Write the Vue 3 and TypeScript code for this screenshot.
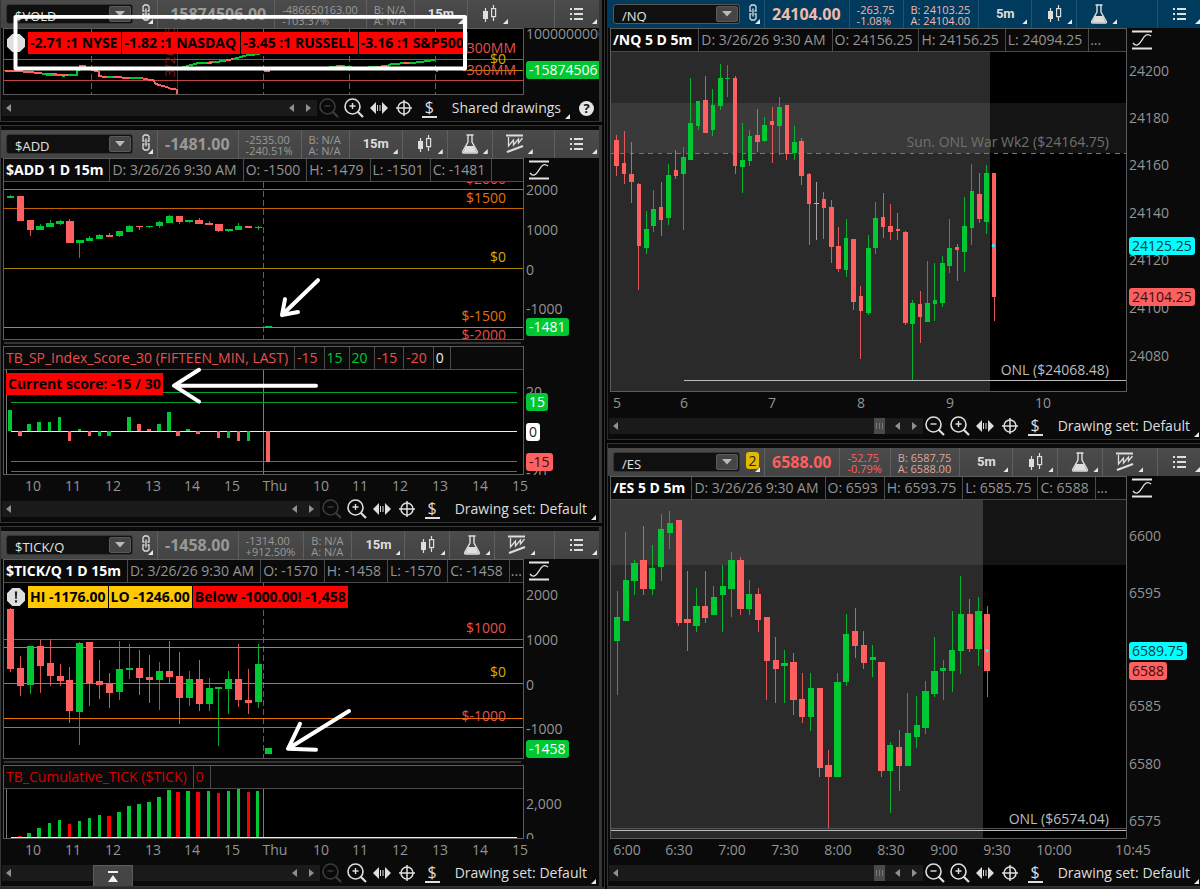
<script setup lang="ts">
type Tone = 'up' | 'down' | 'flat' | 'red' | 'orange' | 'amber' | 'gold' | 'white' | 'cyan' | 'grey' | 'rust' | 'dim' | 'pale' | 'bright'
type Candle = [number, number, number, number, 'u' | 'd' | 'f']
type Bar = [number, number, number, 'u' | 'd']

interface Level { y: number; tone: Tone; from?: number; to?: number; dash?: boolean }
interface Label { y: number; text: string; tone?: Tone }
interface Pane {
  cells: { text: string; tone?: Tone; title?: boolean }[]
  more?: boolean
  scaleIcon?: boolean
  height: number
  box: [number, number, number, number]
  areas?: { x: number; y: number; w: number; h: number; kind: string }[]
  levels: Level[]
  verticals?: { x: number; kind: string }[]
  candles?: { start: number; step: number; width: number; rows: Candle[] }
  bars?: { width: number; rows: Bar[]; tone?: string }
  strokes?: { points: string; tone: Tone }[]
  dot?: [number, number]
  notes: Label[]
  wideNotes?: Label[]
  ticks: Label[]
  tags: Label[]
  alert?: boolean
  chips?: { text: string; kind: string }[]
  dateMark?: string
}
interface Panel {
  id: string
  symbol: string
  link: 'chain' | 'badge'
  tone: string
  active?: boolean
  price: string
  change: [string, string]
  quote: [string, string]
  period: string
  tools: string[]
  panes: Pane[]
  times: [number, string][]
  timeBox: [number, number]
  thumb?: boolean
  canZoomOut?: boolean
  drawing: string
  help?: boolean
  drawer?: boolean
  marks?: { size: string; paths: string[] }
}

const sessionHours: [number, string][] = [
  [33, '10'], [73, '11'], [113, '12'], [153, '13'], [192, '14'], [232, '15'], [275, 'Thu'],
  [321, '10'], [360, '11'], [400, '12'], [440, '13'], [480, '14'], [520, '15'],
]

const left: Panel[] = [
  {
    id: 'vold', symbol: '$VOLD', link: 'chain', tone: 'muted', price: '-15874506.00',
    change: ['-486650163.00', '-103.37%'], quote: ['B: N/A', 'A: N/A'], period: '15m', tools: ['candles'],
    drawing: 'Shared drawings', help: true, times: [], timeBox: [3, 521],
    panes: [{
      cells: [], height: 65, box: [12, 87, 1557, 195],
      levels: [
        { y: 177, tone: 'rust' }, { y: 241, tone: 'rust' }, { y: 210, tone: 'gold', to: 40 }, { y: 210, tone: 'gold', from: 1400 },
      ],
      verticals: [{ x: 275, kind: 'dash' }, { x: 790, kind: 'dash' }, { x: 1048, kind: 'dash' }, { x: 1305, kind: 'dash' }, { x: 532, kind: 'ruby' }],
      strokes: [
        { tone: 'down', points: '14,213 60,214 90,216 120,220 160,223' },
        { tone: 'up', points: '124,220 140,224 175,225 190,227 210,225 232,225 232,210 238,210 238,200' },
        { tone: 'down', points: '160,223 205,225' },
        { tone: 'down', points: '238,198 254,198 254,206' },
        { tone: 'down', points: '276,208 285,213 298,215 298,228 308,230 350,231 380,234 420,233 440,238 460,241 468,252 480,256 500,261 512,266 524,266 530,270 530,282' },
        { tone: 'up', points: '320,232 340,231' },
        { tone: 'up', points: '390,233 425,234' },
        { tone: 'up', points: '545,203 570,196 595,189 640,187 670,183 700,177 740,166 780,162' },
        { tone: 'down', points: '620,189 640,187' },
        { tone: 'down', points: '675,182 700,177' },
        { tone: 'down', points: '792,213 810,213' },
        { tone: 'up', points: '862,204 890,204' },
        { tone: 'up', points: '985,203 1010,199 1030,199 1060,203 1100,203 1130,200 1160,199 1172,193 1215,189 1260,187 1275,184 1305,180' },
        { tone: 'down', points: '1010,200 1026,199' },
        { tone: 'down', points: '1140,201 1162,198' },
        { tone: 'down', points: '1212,189 1226,188' },
        { tone: 'up', points: '1307,213 1315,213' },
      ],
      notes: [{ y: 178, text: '$0', tone: 'gold' }],
      wideNotes: [{ y: 144, text: '300MM', tone: 'red' }, { y: 211, text: '-300MM', tone: 'red' }],
      ticks: [{ y: 105, text: '1000000000' }],
      tags: [{ y: 211, text: '-15874506', tone: 'up' }],
      alert: true,
      chips: [
        { text: '-2.71 :1 NYSE', kind: 'alarm roomy' }, { text: '-1.82 :1 NASDAQ', kind: 'alarm roomy' },
        { text: '-3.45 :1 RUSSELL', kind: 'alarm roomy' }, { text: '-3.16 :1 S&P500', kind: 'alarm roomy' },
      ],
      dateMark: '3/26/26',
    }],
    marks: { size: '0 0 602 122', paths: ['M15.5 17H465V69H15.5Z'] },
  },
  {
    id: 'add', symbol: '$ADD', link: 'chain', tone: 'muted', price: '-1481.00',
    change: ['-2535.00', '-240.51%'], quote: ['B: N/A', 'A: N/A'], period: '15m', tools: ['candles', 'flask', 'pattern'],
    drawing: 'Drawing set: Default', times: sessionHours, timeBox: [3, 521],
    panes: [
      {
        cells: [
          { text: '$ADD 1 D 15m', title: true }, { text: 'D: 3/26/26 9:30 AM' }, { text: 'O: -1500' },
          { text: 'H: -1479' }, { text: 'L: -1501' }, { text: 'C: -1481' },
        ],
        scaleIcon: true, height: 157, box: [12, 171, 1557, 471],
        levels: [{ y: 193, tone: 'red' }, { y: 251, tone: 'amber' }, { y: 430, tone: 'gold' }, { y: 607, tone: 'orange' }],
        verticals: [{ x: 791, kind: 'dash' }],
        candles: {
          start: 31, step: 29.8, width: 22, rows: [
            [209, 214, 218, 219, 'u'], [213, 213, 288, 288, 'd'], [286, 286, 315, 333, 'd'], [297, 303, 315, 315, 'u'],
            [286, 293, 305, 305, 'u'], [286, 289, 296, 301, 'u'], [283, 289, 353, 353, 'd'], [346, 346, 353, 398, 'u'],
            [333, 338, 348, 348, 'u'], [327, 330, 341, 341, 'u'], [324, 330, 335, 335, 'd'], [318, 318, 332, 337, 'u'],
            [300, 303, 320, 320, 'u'], [303, 303, 306, 314, 'd'], [303, 303, 307, 310, 'u'], [288, 291, 303, 308, 'u'],
            [269, 272, 294, 294, 'u'], [272, 272, 290, 296, 'd'], [286, 286, 291, 293, 'u'], [279, 286, 296, 296, 'd'],
            [288, 294, 299, 299, 'd'], [297, 297, 318, 321, 'd'], [312, 313, 318, 320, 'u'], [294, 303, 315, 315, 'u'],
            [303, 303, 310, 310, 'd'], [304, 306, 310, 315, 'u'], [603, 603, 607, 607, 'u'],
          ],
        },
        notes: [
          { y: 162, text: '$2000', tone: 'red' }, { y: 219, text: '$1500', tone: 'orange' }, { y: 398, text: '$0', tone: 'gold' },
          { y: 575, text: '$-1500', tone: 'orange' }, { y: 632, text: '$-2000', tone: 'red' },
        ],
        ticks: [{ y: 197, text: '2000' }, { y: 315, text: '1000' }, { y: 433, text: '0' }, { y: 551, text: '-1000' }],
        tags: [{ y: 604, text: '-1481', tone: 'up' }],
      },
      {
        cells: [
          { text: 'TB_SP_Index_Score_30 (FIFTEEN_MIN, LAST)', tone: 'red' }, { text: '-15', tone: 'red' }, { text: '15', tone: 'up' },
          { text: '20', tone: 'up' }, { text: '-15', tone: 'red' }, { text: '-20', tone: 'red' }, { text: '0', tone: 'white' },
        ],
        height: 104, box: [12, 90, 1557, 312],
        levels: [
          { y: 157, tone: 'up', from: 32, to: 1550 }, { y: 187, tone: 'up', from: 32, to: 1550 }, { y: 274, tone: 'white', from: 32, to: 1550 },
          { y: 365, tone: 'rust', from: 32, to: 1550 }, { y: 395, tone: 'rust', from: 32, to: 1550 },
        ],
        verticals: [{ x: 18, kind: 'solid' }, { x: 791, kind: 'solid' }],
        bars: {
          width: 11, rows: [
            [30, 210, 274, 'u'], [60, 274, 288, 'd'], [87, 252, 274, 'u'], [117, 246, 274, 'u'], [148, 246, 274, 'u'], [178, 232, 274, 'u'],
            [208, 274, 303, 'd'], [238, 267, 274, 'u'], [268, 274, 288, 'd'], [298, 274, 288, 'u'], [326, 274, 288, 'u'], [386, 232, 274, 'u'],
            [417, 252, 274, 'd'], [447, 267, 274, 'd'], [477, 252, 274, 'u'], [507, 216, 274, 'u'], [534, 274, 288, 'd'], [564, 267, 274, 'u'],
            [594, 274, 282, 'd'], [655, 274, 293, 'd'], [685, 274, 293, 'u'], [715, 274, 303, 'd'], [745, 274, 303, 'u'], [803, 274, 365, 'd'],
          ],
        },
        notes: [],
        ticks: [{ y: 157, text: '20' }, { y: 398, text: '-20' }],
        tags: [{ y: 186, text: '15', tone: 'up' }, { y: 274, text: '0', tone: 'white' }, { y: 365, text: '-15', tone: 'down' }],
        chips: [{ text: 'Current score: -15 / 30', kind: 'alarm' }],
      },
    ],
    marks: {
      size: '0 0 602 398',
      paths: ['M318 155L282 190M285 174L282 190L298 187', 'M316 261H174M199 245L174 261L199 277'],
    },
  },
  {
    id: 'tick', symbol: '$TICK/Q', link: 'chain', tone: 'muted', price: '-1458.00',
    change: ['-1314.00', '+912.50%'], quote: ['B: N/A', 'A: N/A'], period: '15m', tools: ['candles', 'flask', 'pattern'],
    drawing: 'Drawing set: Default', drawer: true, times: sessionHours, timeBox: [3, 521],
    panes: [
      {
        cells: [
          { text: '$TICK/Q 1 D 15m', title: true }, { text: 'D: 3/26/26 9:30 AM' }, { text: 'O: -1570' },
          { text: 'H: -1458' }, { text: 'L: -1570' }, { text: 'C: -1458' },
        ],
        more: true, scaleIcon: true, height: 175, box: [12, 174, 1557, 525],
        levels: [
          { y: 343, tone: 'rust' }, { y: 367, tone: 'orange' }, { y: 474, tone: 'gold' }, { y: 580, tone: 'orange' }, { y: 607, tone: 'red' },
        ],
        verticals: [{ x: 791, kind: 'dash' }],
        candles: {
          start: 31, step: 29.8, width: 21, rows: [
            [250, 253, 431, 440, 'd'], [393, 429, 483, 514, 'd'], [363, 363, 480, 508, 'u'], [346, 363, 423, 503, 'd'],
            [342, 415, 453, 483, 'd'], [417, 453, 468, 483, 'd'], [426, 465, 557, 593, 'd'], [350, 354, 560, 661, 'u'],
            [350, 352, 474, 544, 'd'], [404, 468, 479, 522, 'd'], [445, 474, 503, 549, 'd'], [347, 432, 501, 525, 'u'],
            [358, 429, 434, 462, 'u'], [375, 429, 459, 510, 'd'], [390, 456, 465, 534, 'd'], [411, 437, 465, 554, 'u'],
            [348, 437, 456, 478, 'd'], [381, 453, 519, 596, 'd'], [437, 462, 519, 542, 'u'], [406, 462, 538, 557, 'd'],
            [459, 489, 538, 557, 'u'], [486, 486, 492, 663, 'u'], [437, 462, 492, 566, 'u'], [358, 462, 525, 546, 'd'],
            [432, 525, 534, 568, 'd'], [358, 417, 530, 548, 'u'], [669, 669, 687, 687, 'u'],
          ],
        },
        notes: [{ y: 309, text: '$1000', tone: 'red' }, { y: 441, text: '$0', tone: 'gold' }, { y: 575, text: '$-1000', tone: 'red' }],
        ticks: [{ y: 211, text: '2000' }, { y: 345, text: '1000' }, { y: 478, text: '0' }, { y: 611, text: '-1000' }],
        tags: [{ y: 670, text: '-1458', tone: 'up' }],
        alert: true,
        chips: [
          { text: 'HI -1176.00', kind: 'caution' }, { text: 'LO -1246.00', kind: 'caution' }, { text: 'Below -1000.00! -1,458', kind: 'alarm' },
        ],
      },
      {
        cells: [{ text: 'TB_Cumulative_TICK ($TICK)', tone: 'bright' }, { text: '0', tone: 'bright' }],
        height: 49, box: [12, 793, 1557, 147],
        levels: [{ y: 938, tone: 'white', from: 32, to: 1550 }],
        verticals: [{ x: 18, kind: 'solid' }, { x: 791, kind: 'solid' }],
        bars: {
          width: 11, tone: 'pure', rows: [
            [60, 935, 938, 'd'], [87, 924, 936, 'u'], [117, 909, 936, 'u'], [148, 895, 936, 'u'], [178, 886, 936, 'u'], [208, 897, 936, 'd'],
            [238, 888, 936, 'u'], [268, 879, 936, 'u'], [298, 870, 936, 'u'], [326, 873, 936, 'd'], [357, 861, 936, 'u'], [386, 843, 936, 'u'],
            [417, 837, 936, 'u'], [447, 831, 936, 'u'], [477, 816, 936, 'u'], [507, 795, 936, 'u'], [534, 801, 936, 'd'], [564, 798, 936, 'u'],
            [594, 801, 936, 'd'], [625, 798, 936, 'u'], [655, 804, 936, 'd'], [685, 798, 936, 'u'], [715, 793, 936, 'u'], [745, 801, 936, 'd'],
            [772, 798, 936, 'u'],
          ],
        },
        notes: [],
        ticks: [{ y: 839, text: '2,000' }, { y: 938, text: '0' }],
        tags: [],
      },
    ],
    marks: { size: '0 0 602 361', paths: ['M349 185L288 223M300 198L288 223L316 224'] },
  },
]

const right: Panel[] = [
  {
    id: 'nq', symbol: '/NQ', link: 'chain', tone: 'soft', active: true, price: '24104.00',
    change: ['-263.75', '-1.08%'], quote: ['B: 24103.25', 'A: 24104.00'], period: '5m', tools: ['candles', 'flask'],
    drawing: 'Drawing set: Default', thumb: true, canZoomOut: true,
    times: [[617, '5'], [684, '6'], [772, '7'], [861, '8'], [950, '9'], [1043, '10']], timeBox: [610, 517],
    panes: [{
      cells: [
        { text: '/NQ 5 D 5m', title: true }, { text: 'D: 3/26/26 9:30 AM' }, { text: 'O: 24156.25' },
        { text: 'H: 24156.25' }, { text: 'L: 24094.25' },
      ],
      more: true, scaleIcon: true, height: 339, box: [33, 156, 1545, 1017],
      areas: [{ x: 33, y: 156, w: 1137, h: 1017, kind: 'session' }, { x: 33, y: 310, w: 1545, h: 148, kind: 'band' }],
      levels: [{ y: 459, tone: 'dim', dash: true }, { y: 1141, tone: 'pale', from: 253 }],
      candles: {
        start: 50, step: 22.2, width: 14, rows: [
          [405, 420, 498, 528, 'd'], [394, 489, 522, 552, 'd'], [425, 521, 545, 608, 'd'], [550, 552, 738, 871, 'd'],
          [633, 687, 743, 761, 'u'], [570, 628, 677, 696, 'u'], [546, 622, 660, 708, 'd'], [493, 526, 655, 674, 'u'],
          [450, 510, 528, 536, 'd'], [441, 471, 522, 690, 'u'], [235, 370, 480, 480, 'u'], [304, 304, 378, 391, 'u'],
          [228, 301, 398, 398, 'd'], [266, 316, 391, 408, 'u'], [192, 234, 317, 331, 'u'], [195, 234, 238, 291, 'u'],
          [228, 235, 498, 521, 'd'], [370, 480, 500, 580, 'u'], [390, 408, 482, 498, 'u'], [327, 405, 427, 456, 'd'],
          [350, 375, 423, 427, 'u'], [321, 362, 375, 488, 'd'], [291, 321, 378, 464, 'u'], [316, 316, 462, 480, 'd'],
          [378, 425, 458, 479, 'u'], [414, 423, 528, 555, 'd'], [520, 521, 611, 735, 'd'], [546, 608, 611, 720, 'f'],
          [576, 598, 624, 716, 'd'], [600, 622, 740, 789, 'd'], [680, 738, 806, 816, 'd'], [657, 713, 811, 830, 'u'],
          [717, 718, 906, 930, 'd'], [858, 888, 933, 1077, 'd'], [705, 743, 939, 944, 'u'], [606, 655, 744, 761, 'u'],
          [578, 652, 682, 713, 'd'], [611, 677, 696, 720, 'd'], [639, 687, 692, 720, 'd'], [693, 696, 969, 974, 'd'],
          [899, 909, 971, 1140, 'u'], [872, 912, 951, 1028, 'd'], [783, 909, 965, 965, 'u'], [789, 900, 912, 963, 'u'],
          [768, 789, 909, 920, 'u'], [657, 743, 797, 820, 'u'], [732, 741, 750, 844, 'd'], [591, 677, 756, 816, 'u'],
          [493, 573, 684, 735, 'u'], [520, 582, 657, 668, 'd'], [495, 518, 665, 701, 'u'], [518, 518, 891, 963, 'd'],
        ],
      },
      dot: [1180, 737],
      notes: [{ y: 427, text: 'Sun. ONL War Wk2 ($24164.75)', tone: 'dim' }, { y: 1110, text: 'ONL ($24068.48)', tone: 'pale' }],
      ticks: [
        { y: 213, text: '24200' }, { y: 355, text: '24180' }, { y: 495, text: '24160' }, { y: 638, text: '24140' },
        { y: 780, text: '24120' }, { y: 924, text: '24100' }, { y: 1065, text: '24080' },
      ],
      tags: [{ y: 738, text: '24125.25', tone: 'cyan' }, { y: 889, text: '24104.25', tone: 'down' }],
    }],
  },
  {
    id: 'es', symbol: '/ES', link: 'badge', tone: 'loss', price: '6588.00',
    change: ['-52.75', '-0.79%'], quote: ['B: 6587.75', 'A: 6588.00'], period: '5m', tools: ['candles', 'flask', 'pattern'],
    drawing: 'Drawing set: Default', thumb: true, canZoomOut: true,
    times: [
      [627, '6:00'], [679, '6:30'], [732, '7:00'], [785, '7:30'], [838, '8:00'], [891, '8:30'],
      [944, '9:00'], [997, '9:30'], [1054, '10:00'], [1133, '10:45'],
    ],
    timeBox: [610, 517],
    panes: [{
      cells: [
        { text: '/ES 5 D 5m', title: true }, { text: 'D: 3/26/26 9:30 AM' }, { text: 'O: 6593' },
        { text: 'H: 6593.75' }, { text: 'L: 6585.75' }, { text: 'C: 6588' },
      ],
      more: true, scaleIcon: true, height: 338, box: [33, 180, 1545, 1014],
      areas: [{ x: 33, y: 180, w: 1115, h: 1014, kind: 'session' }, { x: 33, y: 180, w: 1545, h: 196, kind: 'band' }],
      levels: [{ y: 1166, tone: 'grey' }, { y: 1170, tone: 'pale' }],
      candles: {
        start: 51, step: 26.45, width: 19, rows: [
          [453, 531, 602, 764, 'u'], [275, 420, 542, 542, 'u'], [361, 369, 423, 465, 'u'], [258, 360, 447, 465, 'd'],
          [316, 385, 447, 465, 'u'], [222, 267, 380, 423, 'u'], [214, 248, 278, 327, 'u'], [240, 240, 549, 557, 'd'],
          [393, 537, 549, 634, 'd'], [445, 498, 557, 576, 'u'], [393, 498, 533, 549, 'd'], [437, 471, 525, 525, 'u'],
          [376, 437, 465, 576, 'u'], [336, 360, 447, 532, 'u'], [352, 360, 507, 525, 'd'], [420, 462, 507, 525, 'u'],
          [445, 462, 541, 576, 'd'], [531, 531, 662, 780, 'd'], [591, 660, 687, 788, 'd'], [631, 668, 678, 788, 'u'],
          [640, 667, 780, 825, 'd'], [700, 777, 831, 849, 'd'], [700, 744, 831, 873, 'u'], [744, 744, 985, 1010, 'd'],
          [931, 975, 1010, 1163, 'd'], [700, 725, 1010, 1010, 'u'], [522, 582, 727, 738, 'u'], [505, 573, 618, 654, 'd'],
          [573, 615, 669, 686, 'd'], [615, 651, 661, 711, 'u'], [666, 667, 993, 1010, 'd'], [906, 914, 993, 1119, 'u'],
          [870, 922, 977, 1053, 'd'], [760, 879, 977, 977, 'u'], [768, 854, 891, 924, 'u'], [724, 753, 864, 881, 'u'],
          [591, 692, 762, 770, 'u'], [659, 684, 693, 780, 'u'], [514, 631, 694, 755, 'u'], [409, 522, 633, 702, 'u'],
          [478, 522, 627, 635, 'd'], [470, 514, 627, 678, 'u'], [498, 522, 694, 770, 'd'],
        ],
      },
      dot: [1161, 632],
      notes: [{ y: 1138, text: 'ONL ($6574.04)', tone: 'pale' }],
      ticks: [
        { y: 288, text: '6600' }, { y: 458, text: '6595' }, { y: 798, text: '6585' }, { y: 971, text: '6580' }, { y: 1141, text: '6575' },
      ],
      tags: [{ y: 632, text: '6589.75', tone: 'cyan' }, { y: 692, text: '6588', tone: 'down' }],
    }],
  },
]

const columns = [{ side: 'left', panels: left }, { side: 'right', panels: right }]

const topOf = (pane: Pane, y: number) => ({ top: `${((y - 1 - pane.box[1]) / pane.box[3]) * 100}%` })
const leftOf = (panel: Panel, x: number) => ({ left: `${((x - panel.timeBox[0]) / panel.timeBox[1]) * 100}%` })
const candleX = (pane: Pane, i: number) => {
  const set = pane.candles!
  return set.start + set.step * i
}
const candleColor = (kind: string) => (kind === 'u' ? 'up' : kind === 'd' ? 'down' : 'flat')
</script>

<template>
  <main class="desk">
    <div v-for="col in columns" :key="col.side" class="column" :class="col.side">
      <section v-for="p in col.panels" :key="p.id" class="panel" :class="{ active: p.active }" :aria-label="p.symbol">
        <header class="toolbar" :class="p.tone">
          <div class="combo">
            <input :id="`symbol-${p.id}`" type="text" :value="p.symbol" aria-label="Symbol" />
            <button type="button" aria-label="Choose symbol"><svg width="10" height="6" viewBox="0 0 10 6"><path d="M0 0h10L5 5.500z" fill="#b9b9b9" /></svg></button>
          </div>
          <button type="button" class="linker corner" aria-label="Link">
            <svg v-if="p.link === 'chain'" width="8" height="17" viewBox="0 0 8 17" fill="none" stroke="#dedede" stroke-width="1.300">
              <path d="M2.500 7H1V2.500L2.500 1h3L7 2.500V7H5.500M2.500 10H1v4.500L2.500 16h3L7 14.500V10H5.500M4 4.500v8" />
            </svg>
            <span v-else class="linkno">2</span>
          </button>
          <strong class="price">{{ p.price }}</strong>
          <span class="pair change"><span>{{ p.change[0] }}</span><span>{{ p.change[1] }}</span></span>
          <span class="pair quote"><span>{{ p.quote[0] }}</span><span>{{ p.quote[1] }}</span></span>
          <button type="button" class="period corner">{{ p.period }}</button>
          <button v-for="t in p.tools" :key="t" type="button" class="tool corner" :aria-label="t">
            <svg v-if="t === 'candles'" width="15" height="18" viewBox="0 0 15 18">
              <path d="M3.500 3v14M11.500 0v16" stroke="#dedede" stroke-width="1.200" />
              <rect x="1" y="6" width="5" height="8" fill="#dedede" />
              <rect class="hollow" x="9.600" y="3.600" width="4" height="8" stroke="#dedede" stroke-width="1.200" />
            </svg>
            <svg v-else-if="t === 'flask'" width="18" height="20" viewBox="0 0 18 20" fill="none" stroke="#dedede" stroke-width="1.400">
              <path d="M5.500 1h7M7 1v7L1.800 17.200Q1 19 2.600 19h12.800Q17 19 16.200 17.200L11 8V1" />
              <path d="M5.200 12h7.600l3 6.500H2z" fill="#dedede" stroke="none" />
            </svg>
            <svg v-else width="18" height="20" viewBox="0 0 18 20" fill="none" stroke="#dedede">
              <path d="M0 1.500h17" stroke-width="2" />
              <path d="M2.500 3v9l5-6v5l5-6v4l4-5" stroke-width="1.300" />
              <path d="M1 18l16-6" stroke-width="2.200" />
            </svg>
          </button>
          <button type="button" class="menu corner" aria-label="Menu">
            <svg width="14" height="13" viewBox="0 0 14 13" fill="#dedede">
              <path d="M0 0h2v2H0zM4 0h9v2H4zM0 5h2v2H0zM4 5h9v2H4zM0 10h2v2H0zM4 10h9v2H4z" />
            </svg>
          </button>
        </header>

        <div v-for="(pane, n) in p.panes" :key="n" class="pane">
          <div class="frame">
            <div v-if="pane.cells.length" class="status">
              <span v-for="(c, i) in pane.cells" :key="i" :class="[c.tone, { title: c.title }]">{{ c.text }}</span>
              <span v-if="pane.more" class="more">...</span>
            </div>
            <div class="plot" :style="{ height: pane.height + 'px' }">
              <svg class="chart" :viewBox="pane.box.join(' ')" preserveAspectRatio="none" shape-rendering="crispEdges">
                <rect v-for="a in pane.areas" :key="a.kind" :x="a.x" :y="a.y" :width="a.w" :height="a.h" :class="a.kind" />
                <line v-for="(v, i) in pane.verticals" :key="'v' + i" :x1="v.x" :x2="v.x" :y1="pane.box[1]" :y2="pane.box[1] + pane.box[3]" class="rule" :class="v.kind" />
                <line v-for="(l, i) in pane.levels" :key="'l' + i" :x1="l.from ?? pane.box[0]" :x2="l.to ?? pane.box[0] + pane.box[2]" :y1="l.y" :y2="l.y" class="level" :class="[l.tone, { dotted: l.dash }]" />
                <template v-if="pane.candles">
                  <g v-for="(c, i) in pane.candles.rows" :key="'c' + i" :class="candleColor(c[4])">
                    <rect class="wick" :x="candleX(pane, i) - 1.5" :y="c[0]" width="3" :height="c[3] - c[0]" />
                    <rect class="body" :x="candleX(pane, i) - pane.candles.width / 2" :y="c[1]" :width="pane.candles.width" :height="c[2] - c[1]" />
                  </g>
                </template>
                <template v-if="pane.bars">
                  <g v-for="(b, i) in pane.bars.rows" :key="'b' + i" :class="[candleColor(b[3]), pane.bars.tone]">
                    <rect class="body" :x="b[0] - pane.bars.width / 2" :y="b[1]" :width="pane.bars.width" :height="b[2] - b[1]" />
                  </g>
                </template>
                <polyline v-for="(s, i) in pane.strokes" :key="'s' + i" :points="s.points" class="trace" :class="s.tone" />
                <circle v-if="pane.dot" :cx="pane.dot[0]" :cy="pane.dot[1]" r="5" fill="#00ffff" shape-rendering="auto" />
              </svg>
              <span v-if="pane.dateMark" class="datemark">{{ pane.dateMark }}</span>
              <span v-for="(t, i) in pane.notes" :key="'n' + i" class="note" :class="t.tone" :style="topOf(pane, t.y)">{{ t.text }}</span>
              <span v-for="(t, i) in pane.wideNotes" :key="'w' + i" class="note wide" :class="t.tone" :style="topOf(pane, t.y)">{{ t.text }}</span>
              <div v-if="pane.chips" class="chips">
                <svg v-if="pane.alert" width="18" height="18" viewBox="0 0 18 18">
                  <path d="M5.300 0h7.400L18 5.300v7.400L12.700 18H5.300L0 12.700V5.300z" fill="#dedede" />
                  <path d="M7.800 3.500h2.400L9.700 11H8.300zM7.900 12.300h2.200v2.200H7.900z" fill="#222" />
                </svg>
                <b v-for="c in pane.chips" :key="c.text" :class="c.kind">{{ c.text }}</b>
              </div>
            </div>
          </div>
          <div class="scale">
            <div v-if="pane.cells.length" class="scalehead">
              <svg v-if="pane.scaleIcon" width="20" height="20" viewBox="0 0 20 20" fill="none" stroke="#e6e6e6">
                <path d="M0 1.500h20M0 18.500h20" stroke-width="2.200" />
                <path d="M1 13C4 17 7 15 10 10S15 3 19 6" stroke-width="1.400" />
              </svg>
            </div>
            <div class="ticks">
              <span v-for="t in pane.ticks" :key="t.text" class="tick" :style="topOf(pane, t.y)">{{ t.text }}</span>
              <span v-for="t in pane.tags" :key="t.text" class="tag" :class="t.tone" :style="topOf(pane, t.y)">{{ t.text }}</span>
            </div>
          </div>
        </div>

        <div v-if="p.times.length" class="times">
          <div class="timescale">
            <span v-for="(t, i) in p.times" :key="i" :style="leftOf(p, t[0])">{{ t[1] }}</span>
          </div>
        </div>
        <div v-else class="spacer"></div>

        <footer class="foot">
          <div class="track">
            <button type="button" aria-label="Scroll to start"><svg width="5" height="8" viewBox="0 0 5 8"><path d="M5 0v8L0 4z" /></svg></button>
            <span class="fill"></span>
            <span v-if="p.thumb" class="thumb"></span>
            <button type="button" class="step" aria-label="Scroll left"><svg width="5" height="8" viewBox="0 0 5 8"><path d="M5 0v8L0 4z" /></svg></button>
            <button type="button" class="step" aria-label="Scroll right"><svg width="5" height="8" viewBox="0 0 5 8"><path d="M0 0v8l5-4z" /></svg></button>
          </div>
          <div class="actions">
            <button type="button" aria-label="Zoom out" :disabled="!p.canZoomOut">
              <svg width="20" height="20" viewBox="0 0 20 20" fill="none" stroke="currentColor"><circle cx="8.500" cy="8.500" r="7.500" stroke-width="1.600" /><path d="M5.500 8h6" stroke-width="1.400" /><path d="M13.500 13.500l5.500 5.500" stroke-width="2.200" /></svg>
            </button>
            <button type="button" aria-label="Zoom in">
              <svg width="20" height="20" viewBox="0 0 20 20" fill="none" stroke="currentColor"><circle cx="8.500" cy="8.500" r="7.500" stroke-width="1.600" /><path d="M5.500 8h6M8.500 5v6" stroke-width="1.400" /><path d="M13.500 13.500l5.500 5.500" stroke-width="2.200" /></svg>
            </button>
            <button type="button" aria-label="Pan">
              <svg width="18" height="12" viewBox="0 0 18 12" fill="currentColor"><path d="M6 0v12L0 6zM12 0v12l6-6zM7 3h1v6H7zM9.500 3h1v6h-1z" /></svg>
            </button>
            <button type="button" aria-label="Crosshair">
              <svg width="16" height="16" viewBox="0 0 16 16" fill="none" stroke="currentColor" stroke-width="1.500"><circle cx="8" cy="8" r="6" /><path d="M8 0v16M0 8h16" /></svg>
            </button>
            <button type="button" class="dollar" aria-label="Price line"><span>$</span></button>
          </div>
          <button type="button" class="drawing corner">{{ p.drawing }}</button>
          <button v-if="p.help" type="button" class="help" aria-label="Help">?</button>
        </footer>
        <button v-if="p.drawer" type="button" class="drawer" aria-label="Expand">
          <svg width="12" height="11" viewBox="0 0 12 11" fill="#f0f0f0"><path d="M1 0h10v2H1zM6 4l5 7H1z" /></svg>
        </button>
        <svg v-if="p.marks" class="marks" :viewBox="p.marks.size" preserveAspectRatio="none">
          <path v-for="d in p.marks.paths" :key="d" :d="d" />
        </svg>
      </section>
    </div>
  </main>
</template>

<style>
body { margin: 0; background: #000; }
</style>

<style scoped>
.desk {
  display: grid;
  grid-template-columns: 605fr 593fr;
  column-gap: 2px;
  overflow: hidden;
  background: #050505;
  font: 14px/20px "Open Sans", "Noto Sans", sans-serif;
  color: #949494;
}
.desk * { box-sizing: border-box; }
button, input { font: inherit; color: inherit; border: 0; padding: 0; margin: 0; background: none; min-width: 0; }
svg { display: block; }

.column { display: flex; flex-direction: column; gap: 3px; min-width: 0; border-bottom: 2px solid #2c2c2c; }
.column.left { padding-right: 2px; border-right: 1px solid #303030; }
.column.right { margin-right: -2px; }
.panel {
  position: relative;
  min-width: 0;
  background: #0a0a0a;
  border: solid #353535;
  border-width: 1px 3px 1px 1px;
  padding-top: 4px;
  padding-bottom: 5px;
}
.column.right .panel { border-right-width: 0; }
.panel:first-child { border-top: 0; padding-top: 0; }
.panel.active { border-color: #003a5c; }

.toolbar {
  display: flex;
  align-items: stretch;
  height: 28px;
  padding-left: 5px;
  background: linear-gradient(#4b4b4b, #434343);
  color: #999;
}
.active .toolbar { background: #003a5c; }
.toolbar > * + * { flex: none; }
.combo {
  display: flex;
  flex: none;
  width: 127px;
  height: 20px;
  margin: 4px 0;
  padding: 1px;
  border: 1px solid #343434;
  border-radius: 3px;
  background: #101010;
}
.combo input { flex: 1; padding: 4px 0 0 7px; color: #e4e4e4; font-size: 13px; line-height: 16px; outline: 0; }
.combo button { width: 22px; display: grid; place-items: center; background: #454545; border: 1px solid #5a5a5a; border-radius: 2px; }
.corner { position: relative; }
.corner::after {
  content: "";
  position: absolute;
  right: 4px;
  bottom: 4px;
  width: 5px;
  height: 5px;
  background: #e8e8e8;
  clip-path: polygon(100% 0, 100% 100%, 0 100%);
}
.linker { width: 24px; padding: 0 6px 3px 9px; display: flex; align-items: center; }
.linkno { width: 13px; margin-left: -3px; border-radius: 3px; background: #e3b800; color: #222; font-size: 14px; line-height: 17px; flex: none; }
.toolbar > .price, .pair, .period, .tool, .menu { border-left: 1px solid #5f5f5f; }
.active .toolbar > * { border-left-color: #215272; }
.active .toolbar > .combo { border-color: #5d5650; }
.hollow { fill: #484848; }
.active .hollow { fill: #003a5c; }
.price { padding: 0 8px 0 7px; font-size: 16px; line-height: 28px; }
.pair { display: flex; flex-direction: column; padding: 4px 8px 0 7px; font-size: 11px; line-height: 11px; }
.period { width: 53px; color: #dedede; font-family: Roboto, "Noto Sans", sans-serif; font-size: 13px; font-weight: 700; }
.tool { width: 45px; display: grid; place-items: center; }
.menu { width: 45px; margin-left: auto; display: grid; place-items: center; }
.period::after, .tool::after { right: 4px; }
.menu::after { right: 2px; }
.soft { color: #f2b9ad; }
.loss .price, .loss .change { color: #ff5f5f; }
.loss .quote { color: #dda59d; }

.pane { display: flex; padding-left: 2px; }
.pane + .pane { margin-top: 6px; }
.pane + .pane::before {
  content: "";
  position: absolute;
  left: 3px;
  right: 78px;
  height: 2px;
  margin-top: -4px;
  background: #333;
}
.frame { flex: 1; min-width: 0; border: 1px solid #5c5c5c; background: #000; }
.status { display: flex; height: 23px; border-bottom: 1px solid #4b4b4b; overflow: hidden; white-space: nowrap; line-height: 22px; background: #0a0a0a; }
.status span { padding: 0 6px 0 2px; border-right: 1px solid #4b4b4b; }
.status .title { color: #fff; font-weight: 700; }
.status .more { border: 0; padding: 0 0 0 1px; }
.plot { position: relative; overflow: hidden; }
.chart { width: 100%; height: 100%; }
.session { fill: #2a2a2a; }
.band { fill: #fff; fill-opacity: 0.08; }
.rule { stroke-width: 3; stroke: #7a7a7a; }
.rule.dash { stroke: #606060; stroke-dasharray: 18 9; }
.rule.ruby { stroke: #7a1c1c; }
.level { stroke-width: 3; stroke: currentColor; }
.level.gold { color: #a88600; }
.level.up { color: #00a32c; }
.level.dim { color: #777; }
.level.dotted { stroke-dasharray: 14 14; }
.trace { fill: none; stroke: currentColor; stroke-width: 6; }
.wick { fill: currentColor; opacity: 0.85; }
.body { fill: currentColor; }
.pure.down { color: #f00; }

.up { color: #00c832; }
.down { color: #ff5f5f; }
.flat { color: #b5b5b5; }
.red { color: #e65050; }
.bright { color: #d60000; }
.rust { color: #bd4444; }
.orange { color: #e67300; }
.amber { color: #c06000; }
.gold { color: #d2b000; }
.white { color: #eee; }
.dim { color: #707070; }
.pale { color: #bcbcbc; }
.grey { color: #555; }

.note { position: absolute; right: 17px; transform: translateY(-50%); white-space: nowrap; }
.note.wide { right: 7px; }
.datemark { position: absolute; left: 156px; bottom: 17px; writing-mode: vertical-rl; transform: rotate(180deg); color: #7a1c1c; }
.chips { position: absolute; top: 3px; left: 2px; display: flex; align-items: center; gap: 1px; white-space: nowrap; }
.chips svg { margin: 0 2px 0 1px; }
.chips b { padding: 0 2px; line-height: 22px; color: #000; }
.chips .roomy { padding-right: 4px; }
.alarm { background: #f00; }
.caution { background: #ffc800; }

.scale { width: 75px; flex: none; display: flex; flex-direction: column; }
.scalehead { height: 24px; padding: 2px 0 0 5px; }
.ticks { position: relative; flex: 1; overflow: hidden; }
.tick { position: absolute; left: 2px; transform: translateY(-50%); line-height: 18px; }
.tag { position: absolute; left: 2px; padding: 0 3px; transform: translateY(-50%); border-radius: 3px; line-height: 18px; color: #fff; }
.tag.up { background: #00c832; }
.tag.white { background: #fff; color: #222; }
.tag.down { background: #ff5f5f; color: #3c0c0c; }
.tag.cyan { background: #00ffff; color: #063c3c; }

.times { height: 26px; padding: 0 75px 0 2px; overflow: hidden; }
.timescale { position: relative; height: 100%; }
.timescale span { position: absolute; top: 1px; transform: translateX(-50%); white-space: nowrap; }
.spacer { height: 5px; }

.foot { display: flex; height: 16px; align-items: center; color: #dedede; }
.track { flex: 1; display: flex; align-items: center; height: 16px; margin-left: 1px; padding-left: 4px; background: #1a1a1a; min-width: 0; }
.track svg { fill: #909090; }
.track .fill { flex: 1; }
.track .step { width: 17px; display: grid; place-items: center; }
.thumb {
  width: 11px;
  height: 16px;
  margin-right: 4px;
  border: 2px solid #4a4a4a;
  border-width: 5px 2px;
  background: repeating-linear-gradient(90deg, #777 0 1px, #4a4a4a 1px 3px);
}
.actions { display: flex; align-items: center; flex: none; }
.actions button { width: 25px; height: 20px; display: grid; place-items: center; }
.actions button:disabled { color: #3c3c3c; }
.dollar span { width: 15px; border-bottom: 2px solid #dedede; font-size: 16px; line-height: 17px; text-align: center; }
.drawing { flex: none; padding: 0 12px 0 10px; line-height: 20px; }
.drawing::after { right: 3px; bottom: -1px; }
.help { width: 15px; height: 15px; margin: 0 5px 0 6px; border-radius: 50%; background: #e4e4e4; color: #111; font-weight: 700; font-size: 13px; line-height: 15px; }
.drawer {
  position: absolute;
  left: 92px;
  bottom: 0;
  width: 40px;
  height: 21px;
  display: grid;
  place-items: center;
  background: #454545;
  border: 1px solid #5c5c5c;
  border-bottom: 0;
}
.marks { position: absolute; top: 0; left: -1px; width: calc(100% + 4px); height: 100%; pointer-events: none; }
.marks path { fill: none; stroke: #fff; stroke-width: 4; stroke-linecap: round; stroke-linejoin: round; }
</style>
